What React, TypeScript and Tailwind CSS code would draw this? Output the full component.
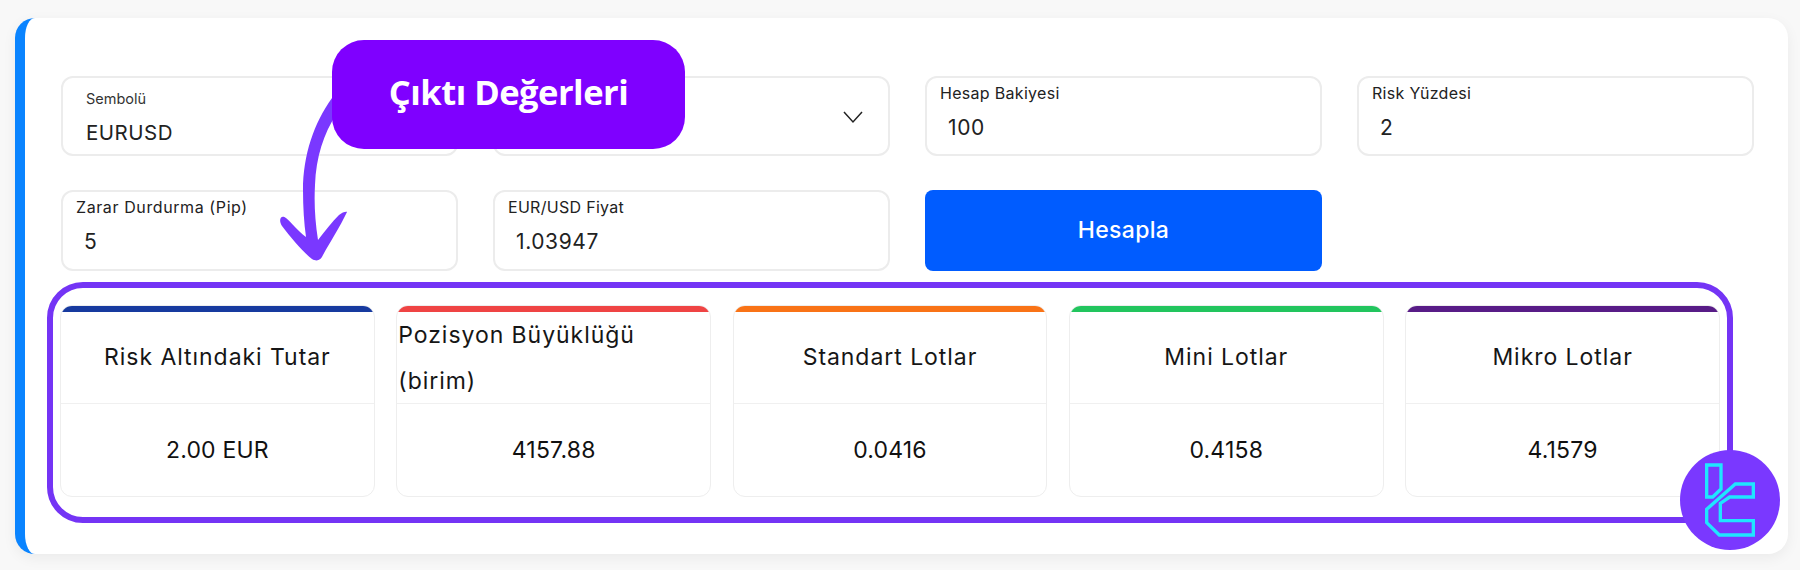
const Field = ({ label, value, labelClass, valueClass, children }: { label?: string; value?: string; labelClass?: string; valueClass?: string; children?: React.ReactNode }) => (
  <div className="relative h-full rounded-xl border-2 border-[#ececec] bg-white">
    {label && <div className={`text-[#222] ${labelClass ?? "pl-[13px] pt-[3px] text-[16px] leading-6 tracking-[0.3px]"}`}>{label}</div>}
    {value && <div className={`text-[#222] ${valueClass ?? "pl-[21px] pt-[9px] text-[21px] leading-7 tracking-[0.6px]"}`}>{value}</div>}
    {children}
  </div>
);

const Result = ({ title, value, bar, left }: { title: React.ReactNode; value: string; bar: string; left?: boolean }) => (
  <div className="flex h-[192px] flex-col overflow-hidden rounded-xl border border-[#eeeeee] bg-white">
    <div className={`h-[6px] shrink-0 ${bar}`} />
    <div className={`flex h-[92px] shrink-0 items-center border-b border-[#f0f0f0] text-[23px] tracking-[0.95px] text-[#161616] ${left ? "justify-start pl-[1px] text-left leading-[46px]" : "justify-center text-center"}`}>
      <div>{title}</div>
    </div>
    <div className="flex flex-1 items-center justify-center text-[23px] tracking-[0.2px] text-[#111]">{value}</div>
  </div>
);

export default function App() {
  return (
    <div className="relative h-[570px] w-[1800px] overflow-hidden bg-[#f8f8f8] pl-[15px] pt-[18px] font-['Inter',sans-serif]">
      <div className="h-[536px] w-[1773px] rounded-[20px] border-l-[10px] border-[#0a84ff] bg-white pl-[36px] pt-[58px] shadow-[0_4px_14px_rgba(0,0,0,0.06)]">
        <div className="grid w-[1693px] grid-cols-[397px_397px_397px_397px] grid-rows-[80px_81px] gap-x-[35px] gap-y-[34px]">
          <Field label="Sembolü" value="EURUSD" labelClass="pl-[23px] pt-[11px] text-[14.5px] leading-5 text-[#333]" valueClass="pl-[23px] pt-[10px] text-[20.5px] leading-7 tracking-[0.5px]" />
          <Field>
            <svg className="absolute right-[24px] top-[32px] h-[14px] w-[22px]" viewBox="0 0 22 14" fill="none" stroke="#222" strokeWidth="1.5">
              <path d="M2 2 L11 12 L20 2" />
            </svg>
          </Field>
          <Field label="Hesap Bakiyesi" value="100" />
          <Field label="Risk Yüzdesi" value="2" />
          <Field label="Zarar Durdurma (Pip)" value="5" labelClass="pl-[13px] pt-[3px] text-[16px] leading-6 tracking-[0.6px]" />
          <Field label="EUR/USD Fiyat" value="1.03947" />
          <button className="h-full rounded-lg bg-[#005cff] text-[23px] font-medium tracking-[0.3px] text-white">Hesapla</button>
        </div>
        <div className="-ml-[14px] mt-[11px] h-[241px] w-[1686px] rounded-[36px] border-[6px] border-[#7434f5] pl-[7px] pt-[17px]">
          <div className="grid grid-cols-5 gap-x-[21.5px] pr-[7px]">
            <Result title="Risk Altındaki Tutar" value="2.00 EUR" bar="bg-[#173a9f]" />
            <Result title={<>Pozisyon Büyüklüğü<br />(birim)</>} value="4157.88" bar="bg-[#ef4444]" left />
            <Result title="Standart Lotlar" value="0.0416" bar="bg-[#f97316]" />
            <Result title="Mini Lotlar" value="0.4158" bar="bg-[#22c55e]" />
            <Result title="Mikro Lotlar" value="4.1579" bar="bg-[#581c87]" />
          </div>
        </div>
      </div>

      <svg className="absolute left-[270px] top-[85px] h-[185px] w-[90px]" viewBox="0 0 90 185" fill="#7a38ff">
        <path d="M62 13 C44 38 33 70 33 105 C33 122 34 138 36 152 C28 146 22 138 16 133 C11 129 8 135 12 141 C22 154 33 167 42 174 C47 177 51 175 53 170 C60 157 70 142 77 127 C77 126 72 127 69 130 C62 137 55 146 48 155 C45 135 44 118 45 100 C46 72 54 48 66 30 Z" />
      </svg>
      <div className="absolute left-[332px] top-[40px] flex h-[109px] w-[353px] items-start justify-center rounded-[32px] bg-[#7f00ff] pt-[24px] font-['Open_Sans',sans-serif] text-[34.5px] font-bold leading-[56px] tracking-[-0.5px] text-white">
        Çıktı Değerleri
      </div>
      <svg className="absolute left-[1680px] top-[450px] h-[100px] w-[100px]" viewBox="360 90 300 300">
        <circle cx="510" cy="240" r="150" fill="#7a38ff" />
        <g fill="none" stroke="#1fe6ff" strokeWidth="10">
          <path d="M440 135 H483 V207 L458 231 H440 Z" />
          <path d="M580 192 H526 L440 268 V308 L478 345 H580 V302 H481 V250 L509 231 H580 Z" />
        </g>
      </svg>
    </div>
  );
}
